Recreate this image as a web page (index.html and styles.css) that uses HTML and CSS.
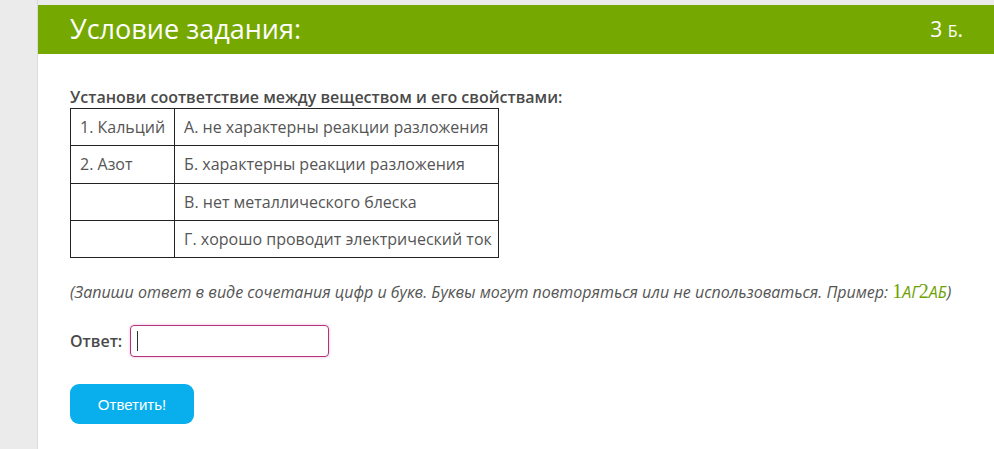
FILE: index.html
```html
<!DOCTYPE html>
<html lang="ru">
<head>
<meta charset="utf-8">
<title>Условие задания</title>
<link rel="stylesheet" href="styles.css">
</head>
<body>
<div class="page">
  <aside class="side"></aside>
  <main class="panel">
    <header class="head">
      <h1 class="title">Условие задания:</h1>
      <span class="points">3 <span class="sc">б</span>.</span>
    </header>
    <section class="body">
      <p class="task">Установи соответствие между веществом и его свойствами:</p>
      <table class="match">
        <tr><td>1. Кальций</td><td>А. не характерны реакции разложения</td></tr>
        <tr><td>2. Азот</td><td>Б. характерны реакции разложения</td></tr>
        <tr><td></td><td>В. нет металлического блеска</td></tr>
        <tr><td></td><td>Г. хорошо проводит электрический ток</td></tr>
      </table>
      <p class="hint">(Запиши ответ в виде сочетания цифр и букв. Буквы могут повторяться или не использоваться. Пример: <span class="ex"><span class="num">1</span>АГ<span class="num">2</span>АБ</span>)</p>
      <div class="answer">
        <label class="answer-label">Ответ:</label>
        <div class="input"><span class="caret"></span></div>
      </div>
      <button class="btn">Ответить!</button>
    </section>
  </main>
</div>
</body>
</html>
```
FILE: styles.css
```css
html, body {
  margin: 0;
  padding: 0;
  background: #ebebeb;
  height: 100%;
}
.page {
  display: flex;
  height: 449px;
  overflow: hidden;
}
.side {
  width: 37px;
  flex: none;
  border-right: 1px solid #dadada;
}
.panel {
  flex: 1;
  margin-top: 5px;
  background: #fff;
  font-family: "Open Sans", sans-serif;
  color: #505050;
}
.head {
  height: 49px;
  background: #75a901;
  display: flex;
  align-items: center;
  justify-content: space-between;
  padding: 0 31px 0 32px;
  color: #fff;
}
.title {
  margin: 0 0 2px;
  font-size: 27px;
  font-weight: 400;
  line-height: 1;
}
.points {
  font-size: 21px;
  line-height: 1;
  margin-bottom: 2px;
}
.sc {
  font-variant: small-caps;
  font-size: 23px;
}
.body {
  padding: 32px 32px 0;
}
.task {
  margin: 0;
  font-size: 16px;
  font-weight: 600;
  line-height: 22px;
  color: #4a4a4a;
}
.match {
  border-collapse: collapse;
  font-size: 16px;
  color: #555;
}
.match td {
  border: 1px solid #222;
  height: 36.3px;
  padding: 0 9px 0 9px;
  line-height: 20px;
  white-space: nowrap;
}
.match td:first-child {
  width: 85px;
}
.match td + td {
  padding-right: 6px;
}
.hint {
  margin: 22px 0 0;
  font-size: 16px;
  font-style: italic;
  line-height: 22px;
  color: #555;
}
.ex {
  color: #6c9f00;
}
.num {
  font-family: "Liberation Serif", "DejaVu Serif", serif;
  font-style: normal;
  font-size: 20px;
}
.answer {
  display: flex;
  align-items: center;
  gap: 8px;
  margin-top: 22px;
}
.answer-label {
  font-size: 16px;
  font-weight: 600;
  color: #4a4a4a;
}
.input {
  height: 30px;
  border: 1px solid #b5317b;
  border-radius: 4px;
  box-shadow: 0 0 3px rgba(181, 49, 123, 0.35);
  display: flex;
  align-items: center;
  padding-left: 6px;
  box-sizing: content-box;
  width: 191px;
}
.caret {
  width: 1px;
  height: 20px;
  background: #333;
}
.btn {
  display: block;
  margin-top: 27px;
  width: 124px;
  height: 40px;
  border: none;
  border-radius: 9px;
  background: #08afec;
  color: #fff;
  font-family: "Liberation Sans", Arial, sans-serif;
  font-size: 15px;
  cursor: pointer;
}
```
